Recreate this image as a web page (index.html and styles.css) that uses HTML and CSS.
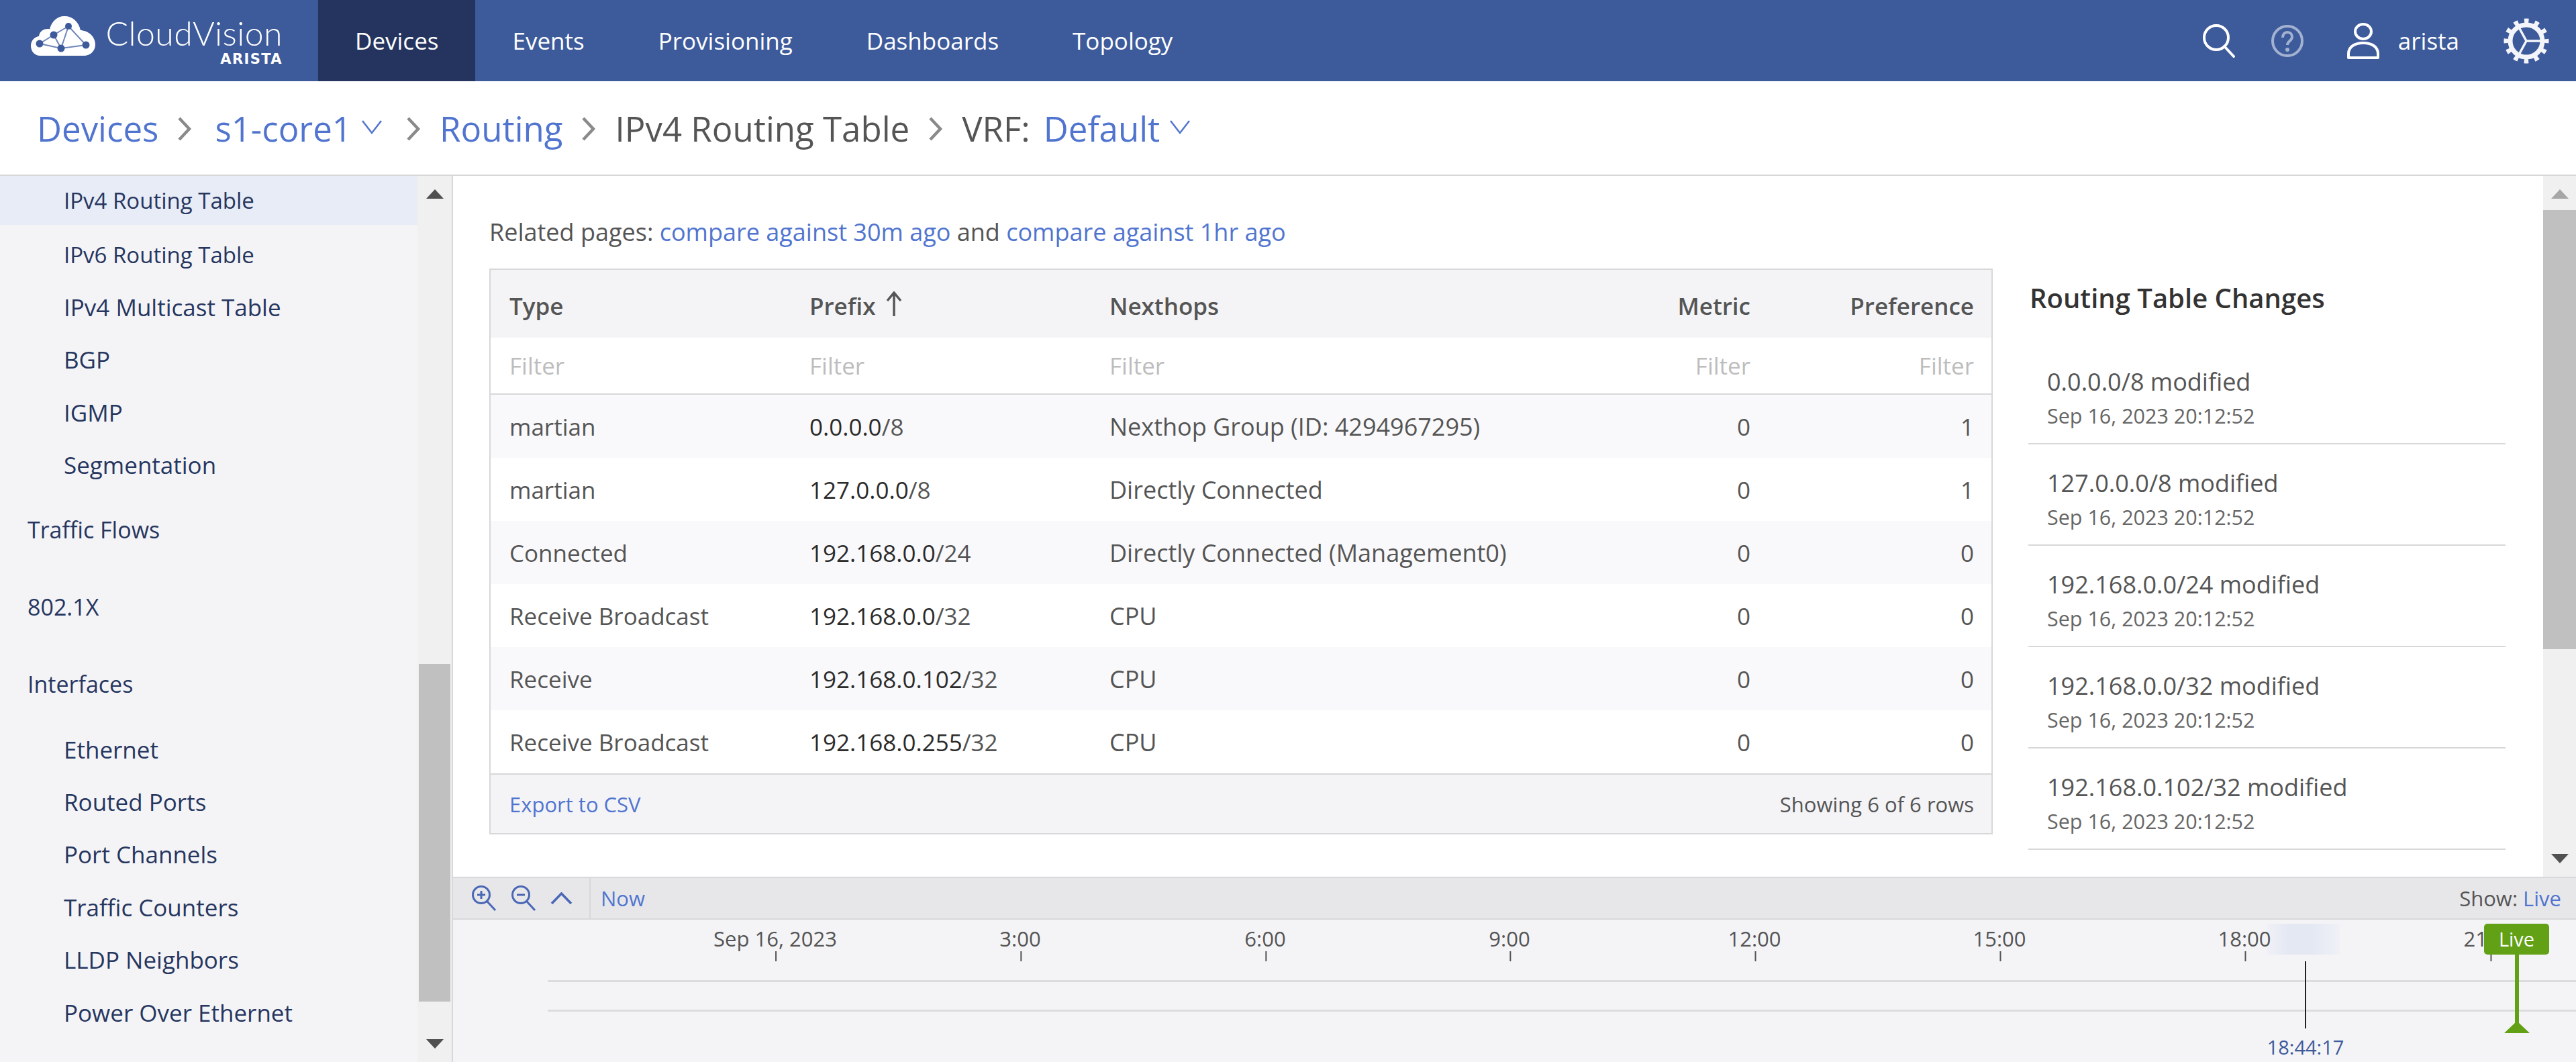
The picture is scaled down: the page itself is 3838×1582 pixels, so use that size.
FILE: index.html
```html
<!DOCTYPE html>
<html>

<head>
    <title>CloudVision - IPv4 Routing Table</title>
    <link rel="stylesheet" href="styles.css">
</head>

<body>

    <!-- Top navigation -->
    <header class="topbar">
        <div class="brand">
            <svg class="brand-cloud" viewBox="0 0 96 60">
                <path fill="#fff" d="M14 59C5 59 0 52 0 44c0-7 5-13 12-14 1-7 6-11 13-11 1 0 2 0 3 .5C31 8 39 0 50 0c12 0 21 8 24 21 1 0 2 0 3 .5 10 1 19 10 19 21 0 10-8 16.500-17 16.500z" />
                <g fill="none" stroke="#6f86bb" stroke-width="2">
                    <path d="M56 15 34 28 13 41 45 48 82 43z" />
                    <path d="M56 15 45 48M34 28 45 48" />
                </g>
                <g fill="#3d5a9b">
                    <circle cx="56" cy="15" r="5" />
                    <circle cx="34" cy="28" r="5.500" />
                    <circle cx="13" cy="41" r="5.500" />
                    <circle cx="45" cy="48" r="5.500" />
                    <circle cx="82" cy="43" r="5.500" />
                </g>
            </svg>
            <div class="brand-text">
                <span class="brand-name">CloudVision</span>
                <span class="brand-sub">ARISTA</span>
            </div>
        </div>
        <nav class="mainnav">
            <a class="active">Devices</a>
            <a>Events</a>
            <a>Provisioning</a>
            <a>Dashboards</a>
            <a>Topology</a>
        </nav>
        <div class="topbar-tools">
            <svg class="icon-search" viewBox="0 0 48 50">
                <ellipse cx="20" cy="20" rx="18" ry="18" fill="none" stroke="#fff" stroke-width="4" />
                <path d="M32 33 46 48" stroke="#fff" stroke-width="4" stroke-linecap="round" />
            </svg>
            <svg class="icon-help" viewBox="0 0 48 50">
                <circle cx="24" cy="25" r="22" fill="none" stroke="#a3b2d1" stroke-width="4" />
                <path d="M17 20c0-5 3-8 7-8s7 3 7 7c0 6-7 6-7 12" fill="none" stroke="#a3b2d1" stroke-width="4" />
                <circle cx="24" cy="38" r="3" fill="#a3b2d1" />
            </svg>
            <svg class="icon-user" viewBox="0 0 48 54">
                <ellipse cx="24" cy="13" rx="12" ry="11" fill="none" stroke="#fff" stroke-width="4" />
                <path d="M2 52v-6c0-10 9-16 22-16s22 6 22 16v6z" fill="none" stroke="#fff" stroke-width="4" stroke-linejoin="round" />
            </svg>
            <span class="username">arista</span>
            <svg class="icon-gear" viewBox="0 0 68 68">
                <circle cx="34" cy="34" r="24" fill="none" stroke="#f4f5fa" stroke-width="7" />
                <circle cx="34" cy="34" r="30" fill="none" stroke="#f4f5fa" stroke-width="7" stroke-dasharray="6.500 9.208" stroke-dashoffset="3.250" />
                <path d="M34 34h24M34 34 22 12M34 34 22 56" fill="none" stroke="#f4f5fa" stroke-width="3.500" />
            </svg>
        </div>
    </header>

    <!-- Breadcrumb -->
    <div class="crumbs">
        <a>Devices</a>
        <svg class="crumb-sep first" viewBox="0 0 22 36"><path d="M3 2 18 18 3 34" /></svg>
        <a>s1-core1</a>
        <svg class="crumb-caret" viewBox="0 0 32 22"><path d="M2 2 16 20 30 2" /></svg>
        <svg class="crumb-sep" viewBox="0 0 22 36"><path d="M3 2 18 18 3 34" /></svg>
        <a>Routing</a>
        <svg class="crumb-sep" viewBox="0 0 22 36"><path d="M3 2 18 18 3 34" /></svg>
        <span>IPv4 Routing Table</span>
        <svg class="crumb-sep" viewBox="0 0 22 36"><path d="M3 2 18 18 3 34" /></svg>
        <span>VRF:</span>
        <a class="crumb-vrf">Default</a>
        <svg class="crumb-caret" viewBox="0 0 32 22"><path d="M2 2 16 20 30 2" /></svg>
    </div>

    <div class="workspace">

        <!-- Left side menu -->
        <aside class="sidebar">
            <div class="side-list">
                <a class="side-item side-ip active">IPv4 Routing Table</a>
                <a class="side-item side-ip">IPv6 Routing Table</a>
                <a class="side-item">IPv4 Multicast Table</a>
                <a class="side-item">BGP</a>
                <a class="side-item">IGMP</a>
                <a class="side-item">Segmentation</a>
                <a class="side-group">Traffic Flows</a>
                <a class="side-group">802.1X</a>
                <a class="side-group">Interfaces</a>
                <a class="side-item">Ethernet</a>
                <a class="side-item">Routed Ports</a>
                <a class="side-item">Port Channels</a>
                <a class="side-item">Traffic Counters</a>
                <a class="side-item">LLDP Neighbors</a>
                <a class="side-item">Power Over Ethernet</a>
            </div>
            <div class="scrollbar side-scroll">
                <span class="arrow-up"></span>
                <span class="thumb"></span>
                <span class="arrow-down"></span>
            </div>
        </aside>

        <div class="right-col">
            <div class="content-wrap">
                <main class="content">
                    <section class="table-area">
                        <p class="related">Related pages: <a>compare against 30m ago</a> and <a>compare against 1hr ago</a></p>
                        <table class="routes">
                            <colgroup>
                                <col class="col-type">
                                <col class="col-prefix">
                                <col class="col-hops">
                                <col class="col-metric">
                                <col class="col-pref">
                            </colgroup>
                            <thead>
                                <tr class="head-row">
                                    <th>Type</th>
                                    <th>Prefix <svg class="sort-up" viewBox="0 0 26 38"><path d="M13 37V3M3 14 13 2 23 14" /></svg></th>
                                    <th>Nexthops</th>
                                    <th class="num">Metric</th>
                                    <th class="num">Preference</th>
                                </tr>
                                <tr class="filter-row">
                                    <td>Filter</td>
                                    <td>Filter</td>
                                    <td>Filter</td>
                                    <td class="num">Filter</td>
                                    <td class="num">Filter</td>
                                </tr>
                            </thead>
                            <tbody>
                                <tr>
                                    <td>martian</td>
                                    <td><b>0.0.0.0</b>/8</td>
                                    <td class="hops">Nexthop Group (ID: 4294967295)</td>
                                    <td class="num">0</td>
                                    <td class="num">1</td>
                                </tr>
                                <tr>
                                    <td>martian</td>
                                    <td><b>127.0.0.0</b>/8</td>
                                    <td class="hops">Directly Connected</td>
                                    <td class="num">0</td>
                                    <td class="num">1</td>
                                </tr>
                                <tr>
                                    <td>Connected</td>
                                    <td><b>192.168.0.0</b>/24</td>
                                    <td class="hops">Directly Connected (Management0)</td>
                                    <td class="num">0</td>
                                    <td class="num">0</td>
                                </tr>
                                <tr>
                                    <td>Receive Broadcast</td>
                                    <td><b>192.168.0.0</b>/32</td>
                                    <td class="hops">CPU</td>
                                    <td class="num">0</td>
                                    <td class="num">0</td>
                                </tr>
                                <tr>
                                    <td>Receive</td>
                                    <td><b>192.168.0.102</b>/32</td>
                                    <td class="hops">CPU</td>
                                    <td class="num">0</td>
                                    <td class="num">0</td>
                                </tr>
                                <tr>
                                    <td>Receive Broadcast</td>
                                    <td><b>192.168.0.255</b>/32</td>
                                    <td class="hops">CPU</td>
                                    <td class="num">0</td>
                                    <td class="num">0</td>
                                </tr>
                            </tbody>
                            <tfoot>
                                <tr class="foot-row">
                                    <td colspan="3"><a>Export to CSV</a></td>
                                    <td colspan="2" class="num">Showing 6 of 6 rows</td>
                                </tr>
                            </tfoot>
                        </table>
                    </section>
                    <section class="changes">
                        <h3>Routing Table Changes</h3>
                        <div class="change">
                            <span class="change-title">0.0.0.0/8 modified</span>
                            <span class="change-time">Sep 16, 2023 20:12:52</span>
                        </div>
                        <div class="change">
                            <span class="change-title">127.0.0.0/8 modified</span>
                            <span class="change-time">Sep 16, 2023 20:12:52</span>
                        </div>
                        <div class="change">
                            <span class="change-title">192.168.0.0/24 modified</span>
                            <span class="change-time">Sep 16, 2023 20:12:52</span>
                        </div>
                        <div class="change">
                            <span class="change-title">192.168.0.0/32 modified</span>
                            <span class="change-time">Sep 16, 2023 20:12:52</span>
                        </div>
                        <div class="change">
                            <span class="change-title">192.168.0.102/32 modified</span>
                            <span class="change-time">Sep 16, 2023 20:12:52</span>
                        </div>
                    </section>
                </main>
                <div class="scrollbar main-scroll">
                    <span class="arrow-up"></span>
                    <span class="thumb"></span>
                    <span class="arrow-down"></span>
                </div>
            </div>

            <!-- Timeline controls -->
            <div class="time-bar">
                <div class="time-tools">
                    <svg class="zoom-icon" viewBox="0 0 38 38">
                        <circle cx="15" cy="14" r="12.500" fill="none" stroke="#4a68b5" stroke-width="3" />
                        <path d="M24 24 36 37M9 14h12M15 8v12" fill="none" stroke="#4a68b5" stroke-width="3" />
                    </svg>
                    <svg class="zoom-icon" viewBox="0 0 38 38">
                        <circle cx="15" cy="14" r="12.500" fill="none" stroke="#4a68b5" stroke-width="3" />
                        <path d="M24 24 36 37M9 14h12" fill="none" stroke="#4a68b5" stroke-width="3" />
                    </svg>
                    <svg class="collapse-icon" viewBox="0 0 33 18">
                        <path d="M2 17 16.500 2 31 17" fill="none" stroke="#4a68b5" stroke-width="3.500" />
                    </svg>
                </div>
                <a class="time-now">Now</a>
                <div class="time-show">Show: <a>Live</a></div>
            </div>

            <!-- Timeline canvas -->
            <div class="timeline">
                <span class="track track-a"></span>
                <span class="track track-b"></span>
                <span class="hover-glow"></span>
                <span class="tick" style="left: 480px">Sep 16, 2023</span>
                <span class="tick" style="left: 845px">3:00</span>
                <span class="tick" style="left: 1210px">6:00</span>
                <span class="tick" style="left: 1574px">9:00</span>
                <span class="tick" style="left: 1939px">12:00</span>
                <span class="tick" style="left: 2304px">15:00</span>
                <span class="tick" style="left: 2669px">18:00</span>
                <span class="tick" style="left: 3035px">21:00</span>
                <span class="cursor-line"></span>
                <span class="cursor-time">18:44:17</span>
                <span class="live-stem"></span>
                <span class="live-flag">Live</span>
                <span class="live-foot"></span>
            </div>
        </div>
    </div>

</body>

</html>
```

FILE: styles.css
```css
* {
    box-sizing: border-box;
}

html,
body {
    margin: 0;
    height: 1582px;
    overflow: hidden;
}

body {
    display: flex;
    flex-direction: column;
    font-family: "Open Sans", "Noto Sans", sans-serif;
    font-size: 35px;
    color: #555;
    background-color: #fff;
}

a {
    color: #5175cf;
}

/* Top navigation */
.topbar {
    display: flex;
    align-items: stretch;
    flex: 0 0 121px;
    background-color: #3d5a9b;
    color: #fff;
}

.brand {
    display: flex;
    width: 474px;
    padding: 24px 0 0 46px;
}

.brand-cloud {
    width: 96px;
    height: 60px;
}

.brand-text {
    display: flex;
    flex-direction: column;
    align-items: flex-end;
    width: 258px;
    margin-left: 21px;
}

.brand-name {
    font-family: "Lato", sans-serif;
    font-weight: 300;
    font-size: 50px;
    line-height: 50px;
    letter-spacing: 0.4px;
}

.brand-sub {
    margin-top: 3px;
    font-family: "DejaVu Sans", sans-serif;
    font-weight: 700;
    font-size: 21px;
    line-height: 22px;
    letter-spacing: 1.4px;
}

.mainnav {
    display: flex;
    flex: 1;
}

.mainnav a {
    display: flex;
    align-items: center;
    padding: 0 55px;
    color: #fff;
    font-size: 35px;
}

.mainnav a.active {
    background-color: #24345e;
}

.topbar-tools {
    display: flex;
    align-items: center;
    padding-right: 40px;
}

.icon-search {
    width: 48px;
    height: 50px;
}

.icon-help {
    width: 48px;
    height: 50px;
    margin-left: 54px;
}

.icon-user {
    width: 48px;
    height: 54px;
    margin-left: 65px;
}

.username {
    margin: 0 66px 0 28px;
    font-size: 35px;
}

.icon-gear {
    width: 68px;
    height: 68px;
}

/* Breadcrumb */
.crumbs {
    display: flex;
    align-items: center;
    flex: 0 0 141px;
    padding-left: 55px;
    border-bottom: 2px solid #d8d8da;
    font-size: 51px;
    color: #555;
}

.crumb-sep {
    width: 22px;
    height: 36px;
    margin: 2px 28px 0 28px;
}

.crumb-sep.first {
    margin-right: 34px;
}

.crumb-sep path {
    fill: none;
    stroke: #8a8a8a;
    stroke-width: 4.5;
}

.crumb-caret {
    width: 32px;
    height: 22px;
    margin: 0 7px 4px 14px;
}

.crumb-caret path {
    fill: none;
    stroke: #5175cf;
    stroke-width: 2.5;
}

.crumb-vrf {
    margin-left: 20px;
}

/* Main area */
.workspace {
    display: flex;
    flex: 1;
    min-height: 0;
}

.sidebar {
    display: flex;
    flex: 0 0 675px;
    border-right: 2px solid #d8d8da;
    background-color: #f4f4f7;
}

.side-list {
    display: flex;
    flex-direction: column;
    flex: 0 0 622px;
    overflow: hidden;
    font-size: 35px;
}

.side-list a {
    display: flex;
    align-items: center;
    flex: none;
    color: #26365f;
}

.side-item {
    height: 78.4px;
    padding-left: 95px;
}

.side-ip {
    font-size: 33px;
}

.side-item.active {
    height: 73px;
    margin-bottom: 5px;
    background-color: #e8ecf6;
}

.side-group {
    height: 115px;
    padding-left: 41px;
    font-size: 34px;
}

.scrollbar {
    display: flex;
    flex-direction: column;
    align-items: center;
    background-color: #f0f0f0;
}

.side-scroll {
    flex: 0 0 51px;
}

.thumb {
    display: block;
    flex: none;
    width: 100%;
    background-color: #c0c0c0;
}

.side-scroll .thumb {
    width: 47px;
    height: 503px;
    margin-top: 693px;
}

.arrow-up,
.arrow-down {
    display: block;
    width: 0;
    height: 0;
    border-left: 13px solid transparent;
    border-right: 13px solid transparent;
}

.arrow-up {
    flex: none;
    margin-top: 20px;
    border-bottom: 14px solid #505050;
}

.arrow-down {
    flex: none;
    margin-top: auto;
    margin-bottom: 20px;
    border-top: 14px solid #505050;
}

.right-col {
    display: flex;
    flex-direction: column;
    flex: 1;
    min-width: 0;
}

.content-wrap {
    display: flex;
    flex: 0 0 1046px;
    border-bottom: 2px solid #d8d8da;
}

.content {
    display: flex;
    flex: 1;
    min-width: 0;
    padding: 0 0 0 54px;
}

.main-scroll {
    flex: 0 0 49px;
}

.main-scroll .arrow-up {
    border-bottom-color: #a6a6a6;
}

.main-scroll .thumb {
    height: 654px;
    margin-top: 17px;
}

/* Routing table */
.table-area {
    flex: 0 0 2240px;
}

.related {
    margin: 0;
    height: 138px;
    padding-top: 60px;
    line-height: 48px;
    font-size: 36px;
}

.routes {
    width: 2240px;
    border-collapse: separate;
    border-spacing: 0;
    border: 2px solid #d8d8da;
    table-layout: fixed;
}

.col-type,
.col-prefix {
    width: 447px;
}

.col-metric {
    width: 220px;
}

.col-pref {
    width: 333px;
}

.routes th,
.routes td {
    padding: 0 26px 0 28px;
    white-space: nowrap;
    text-align: left;
    font-weight: 400;
}

.routes .num {
    text-align: right;
}

.routes .head-row th {
    height: 101px;
    padding-top: 6px;
    background-color: #f4f4f7;
    font-weight: 600;
    color: #555;
}

.sort-up {
    width: 26px;
    height: 38px;
    margin-left: 5px;
    vertical-align: -3px;
}

.sort-up path {
    fill: none;
    stroke: #555;
    stroke-width: 3.5;
}

.filter-row td {
    height: 85px;
    border-bottom: 2px solid #d8d8da;
    color: #bdbdbd;
}

.routes tbody td {
    height: 94px;
}

.routes tbody tr:nth-child(odd) td {
    background-color: #f9f9fb;
}

.routes tbody .hops {
    font-size: 36px;
}

.routes b {
    font-weight: 400;
    color: #2b2b2b;
}

.foot-row td {
    height: 89px;
    border-top: 2px solid #d8d8da;
    background-color: #f4f4f7;
    font-size: 31px;
}

/* Routing table changes */
.changes {
    flex: 0 0 711px;
    margin-left: 53px;
}

.changes h3 {
    margin: 0;
    height: 150px;
    padding: 0 0 0 2px;
    line-height: 364px;
    font-size: 40px;
    font-weight: 600;
    color: #333;
}

.change {
    display: flex;
    flex-direction: column;
    height: 151px;
    padding: 0 0 0 28px;
    border-bottom: 2px solid #d8d8da;
}

.change:first-of-type {
    height: 250px;
    padding-top: 132px;
}

.change-title {
    margin-top: 33px;
    font-size: 36px;
    line-height: 50px;
}

.change:first-of-type .change-title {
    margin-top: 0;
}

.change-time {
    font-size: 30.5px;
    line-height: 50px;
    color: #666;
}

/* Timeline */
.time-bar {
    display: flex;
    align-items: center;
    flex: 0 0 62px;
    border-bottom: 2px solid #d8d8da;
    background-color: #e7e7ea;
    font-size: 31px;
}

.time-tools {
    display: flex;
    align-items: center;
    gap: 21px;
    height: 100%;
    width: 205px;
    padding-left: 27px;
    border-right: 2px solid #d8d8da;
}

.zoom-icon {
    width: 38px;
    height: 38px;
}

.collapse-icon {
    width: 33px;
    height: 18px;
}

.time-now {
    margin-left: 15px;
}

.time-show {
    margin-left: auto;
    padding-right: 22px;
}

.timeline {
    position: relative;
    flex: 1;
    background-color: #f4f4f7;
    overflow: hidden;
}

.track {
    position: absolute;
    left: 141px;
    width: 3070px;
    height: 3px;
    background-color: #dcdcdf;
}

.track-a {
    top: 90px;
}

.track-b {
    top: 134px;
}

.hover-glow {
    position: absolute;
    left: 2703px;
    top: 6px;
    width: 108px;
    height: 46px;
    background: linear-gradient(to right, #f0f1f7, #e4e8f3 30%, #e4e8f3 60%, #f0f1f7);
}

.tick {
    position: absolute;
    top: 9px;
    padding-bottom: 15px;
    transform: translateX(-50%);
    font-size: 31px;
    line-height: 38px;
    white-space: nowrap;
}

.tick::after {
    content: "";
    position: absolute;
    left: 50%;
    bottom: 0;
    width: 2px;
    height: 15px;
    background-color: #555;
}

.cursor-line {
    position: absolute;
    left: 2759px;
    top: 62px;
    width: 2px;
    height: 100px;
    background-color: #222;
}

.cursor-time {
    position: absolute;
    left: 2760px;
    top: 171px;
    transform: translateX(-50%);
    font-size: 29px;
    line-height: 38px;
    color: #3d5a9b;
}

.live-stem {
    position: absolute;
    left: 3072px;
    top: 50px;
    width: 6px;
    height: 110px;
    background-color: #62a016;
}

.live-flag {
    position: absolute;
    left: 3026px;
    top: 6px;
    width: 97px;
    height: 46px;
    border-radius: 5px;
    background-color: #62a016;
    color: #fff;
    font-size: 29px;
    line-height: 46px;
    text-align: center;
}

.live-foot {
    position: absolute;
    left: 3056px;
    top: 151px;
    width: 0;
    height: 0;
    border-left: 19px solid transparent;
    border-right: 19px solid transparent;
    border-bottom: 18px solid #62a016;
}
```
